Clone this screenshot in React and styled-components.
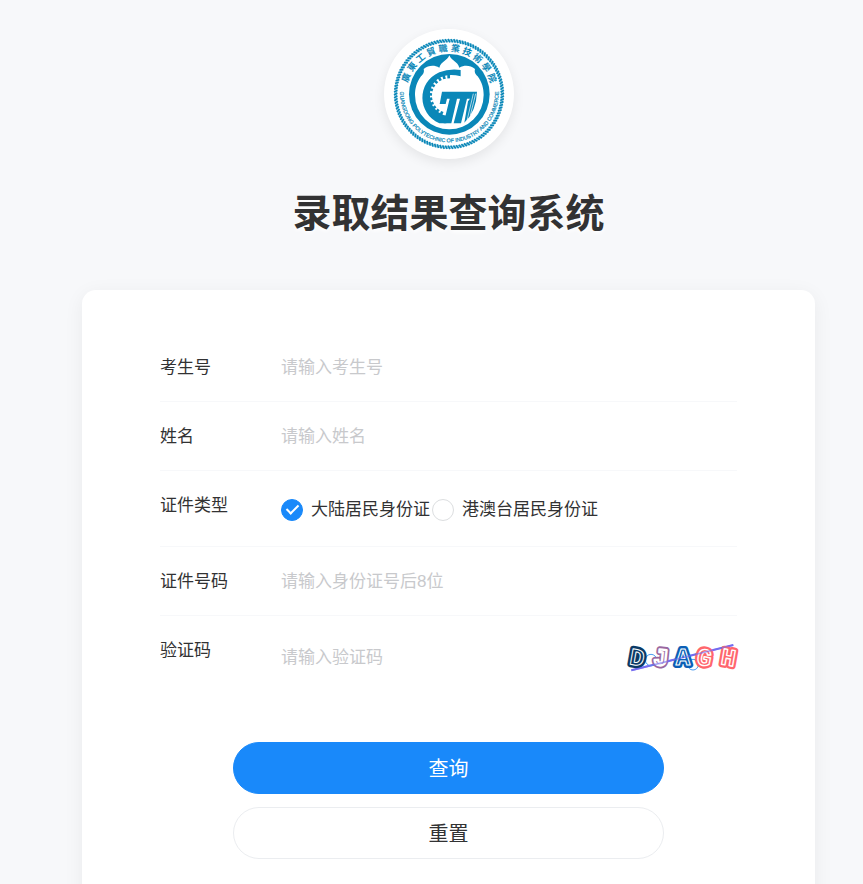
import React, { useState } from "react";
import styled, { createGlobalStyle } from "styled-components";

const GlobalStyle = createGlobalStyle`
  *, *::before, *::after { box-sizing: border-box; }
  body {
    margin: 0;
    background: #f7f8fa;
    color: #323233;
    font-family: "Liberation Sans", "Noto Sans CJK SC", sans-serif;
  }
`;

const Page = styled.main`
  min-height: 100vh;
  padding: 29px 48px 0 82px;
  display: flex;
  flex-direction: column;
  align-items: center;
  background: #f7f8fa;
`;

const Seal = styled.svg`
  display: block;
  width: 130px;
  height: 130px;
  border-radius: 50%;
  background: #fff;
  box-shadow: 0 4px 12px rgba(0, 0, 0, 0.08);
`;

const Title = styled.h1`
  margin: 27px 0 48px;
  font-size: 39px;
  line-height: 56px;
  font-weight: 700;
  text-align: center;
  text-shadow: 0 2px 4px #fff;
`;

const Card = styled.form`
  width: 100%;
  padding: 43px 78px 52px;
  border-radius: 14px;
  background: #fff;
  box-shadow: 0 4px 20px rgba(0, 0, 0, 0.06);
`;

const Row = styled.div`
  display: flex;
  align-items: flex-start;
  padding: 23px 0 21px;
  border-bottom: 1px solid ${(p) => (p.$last ? "transparent" : "#f7f8fa")};
`;

const Caption = styled.label`
  flex: none;
  width: 121px;
  font-size: 17px;
  line-height: 24px;
`;

const Control = styled.div`
  flex: 1;
  min-width: 0;
  display: flex;
  align-items: center;
  justify-content: space-between;
`;

const TextInput = styled.input`
  flex: 1;
  min-width: 0;
  height: 24px;
  padding: 0;
  border: 0;
  outline: 0;
  background: transparent;
  color: #323233;
  font: inherit;
  font-size: 17px;
  line-height: 24px;
  &::placeholder { color: #c8c9cc; opacity: 1; }
`;

const RadioGroup = styled.div`
  display: flex;
  flex-wrap: wrap;
  column-gap: 2px;
  align-items: center;
  min-height: 31px;
`;

const Option = styled.label`
  display: flex;
  align-items: center;
  gap: 8px;
  font-size: 17px;
  line-height: 24px;
  white-space: nowrap;
`;

const Radio = styled.input`
  appearance: none;
  display: grid;
  place-items: center;
  width: 22px;
  height: 22px;
  margin: 0;
  border: 1px solid #dcdee0;
  border-radius: 50%;
  &:checked { border-color: #1989fa; background: #1989fa; }
  &:checked::after {
    content: "";
    width: 7px;
    height: 12px;
    margin-bottom: 4px;
    border: solid #fff;
    border-width: 0 2px 2px 0;
    transform: rotate(45deg);
  }
`;

const CaptchaImage = styled.svg`
  flex: none;
  width: 110px;
  height: 38px;
  overflow: visible;
`;

const Actions = styled.div`
  display: flex;
  flex-direction: column;
  gap: 13px;
  padding: 43px 73px 0;
`;

const Button = styled.button`
  height: 52px;
  padding: 0 0 2px;
  border: 1px solid ${(p) => (p.$primary ? "#1989fa" : "#ebedf0")};
  border-radius: 26px;
  background: ${(p) => (p.$primary ? "#1989fa" : "#fff")};
  color: ${(p) => (p.$primary ? "#fff" : "#323233")};
  font-family: inherit;
  font-size: 20px;
  cursor: pointer;
`;

const BLUE = "#0a87b8";
const SCHOOL = [..."廣東工貿職業技術學院"];
const TEETH = [114, 128, 142, 156, 170, 184, 198, 212, 226, 240, 254, 268];
const ROPE = Array.from({ length: 120 }, (_, i) => i * 3);

function SchoolSeal() {
  return (
    <Seal viewBox="15 15 390 390" role="img" aria-label="广东工贸职业技术学院">
      <defs>
        <path id="seal-arc" d="M64 190A148 148 0 1 0 358 190" />
      </defs>
      <circle cx="210" cy="210" r="160" fill="none" stroke={BLUE} strokeWidth="9" opacity="0.35" />
      <g stroke={BLUE} strokeWidth="5">
        {ROPE.map((a) => (
          <path key={a} d="M207 45L213 55" transform={`rotate(${a} 210 210)`} />
        ))}
      </g>
      <circle cx="211" cy="211" r="121" fill={BLUE} />
      <path
        d="M211 94C204 111 186 112 181 131C165 122 148 124 134 135C137 146 131 152 126 157C113 175 108 193 108 213A103 103 0 0 0 314 213C314 193 309 175 296 157C291 152 285 146 288 135C274 124 257 122 241 131C236 112 218 111 211 94Z"
        fill="#fff"
      />
      <path d="M245 138Q211 133 181 145C111 176 116 270 181 298L202 298L207 276Q172 270 157 239Q143 192 176 165Q204 146 245 157Z" fill={BLUE} />
      {TEETH.map((a) => (
        <rect key={a} x="207" y="151" width="8" height="12" fill={BLUE} transform={`rotate(${a - 270} 211 215)`} />
      ))}
      <path
        d="M189 203H294Q292 262 256 296L267 232L273 224H264L246 298H224L243 224H234L217 298H194L212 224H204L200 240H182Z"
        fill={BLUE}
      />
      <path d="M283 209L264 290M290 209L274 274" fill="none" stroke="#fff" strokeWidth="2" />
      <g fill={BLUE} fontFamily="'Noto Sans CJK TC', sans-serif" fontSize="27" fontWeight="700" textAnchor="middle">
        {SCHOOL.map((char, i) => (
          <text key={i} x="210" y="82" transform={`rotate(${-69 + i * 15.4} 210 210)`}>{char}</text>
        ))}
      </g>
      <text fill={BLUE} stroke={BLUE} strokeWidth="0.6" fontFamily="'Liberation Sans Narrow', 'Liberation Sans', sans-serif" fontSize="16">
        <textPath href="#seal-arc" startOffset="50%" textAnchor="middle">GUANGDONG POLYTECHNIC OF INDUSTRY AND COMMERCE</textPath>
      </text>
    </Seal>
  );
}

const CAPTCHA = [
  { char: "D", x: 54, tilt: 10, color: "#0b3a66", line: 3 },
  { char: "J", x: 126, tilt: 6, color: "#9a679f", line: 7 },
  { char: "A", x: 192, tilt: 0, color: "#0b5fb5", line: 3 },
  { char: "G", x: 256, tilt: 12, color: "#ff666c", line: 4 },
  { char: "H", x: 328, tilt: 10, color: "#ff666c", line: 4 },
];

function Captcha() {
  return (
    <CaptchaImage viewBox="24 9 330 114" role="img" aria-label="验证码图片">
      <path d="M37 103L343 27" stroke="#746cf0" strokeWidth="6" />
      <g fill="none" stroke="#4b9df0" strokeWidth="3">
        <circle cx="96" cy="72" r="17" />
        <circle cx="222" cy="86" r="16" />
      </g>
      <g fontFamily="'Liberation Mono', monospace" fontWeight="700" fontSize="72" textAnchor="middle" strokeLinejoin="round">
        {CAPTCHA.map(({ char, x, tilt, color, line }) => (
          <g key={char} transform={`rotate(${tilt} ${x} 66)`}>
            <text x={x} y="88" fill={color} stroke={color} strokeWidth="18">{char}</text>
            <text x={x} y="88" fill={color} stroke="#fff" strokeWidth={line}>{char}</text>
          </g>
        ))}
      </g>
      <path d="M37 103L343 27" stroke="#746cf0" strokeWidth="5" opacity="0.6" />
    </CaptchaImage>
  );
}

function Field({ id, label, placeholder, last, children }) {
  return (
    <Row $last={last}>
      <Caption htmlFor={id}>{label}</Caption>
      <Control>
        <TextInput id={id} name={id} type="text" placeholder={placeholder} />
        {children}
      </Control>
    </Row>
  );
}

export default function App() {
  const [kind, setKind] = useState("mainland");
  return (
    <Page>
      <GlobalStyle />
      <SchoolSeal />
      <Title>录取结果查询系统</Title>
      <Card onSubmit={(e) => e.preventDefault()} onReset={() => setKind("mainland")}>
        <Field id="candidate" label="考生号" placeholder="请输入考生号" />
        <Field id="name" label="姓名" placeholder="请输入姓名" />
        <Row>
          <Caption as="span" id="kind-label">证件类型</Caption>
          <RadioGroup role="radiogroup" aria-labelledby="kind-label">
            <Option>
              <Radio type="radio" name="kind" checked={kind === "mainland"} onChange={() => setKind("mainland")} />
              大陆居民身份证
            </Option>
            <Option>
              <Radio type="radio" name="kind" checked={kind === "hmt"} onChange={() => setKind("hmt")} />
              港澳台居民身份证
            </Option>
          </RadioGroup>
        </Row>
        <Field id="number" label="证件号码" placeholder="请输入身份证号后8位" />
        <Field id="code" label="验证码" placeholder="请输入验证码" last>
          <Captcha />
        </Field>
        <Actions>
          <Button type="submit" $primary>查询</Button>
          <Button type="reset">重置</Button>
        </Actions>
      </Card>
    </Page>
  );
}
